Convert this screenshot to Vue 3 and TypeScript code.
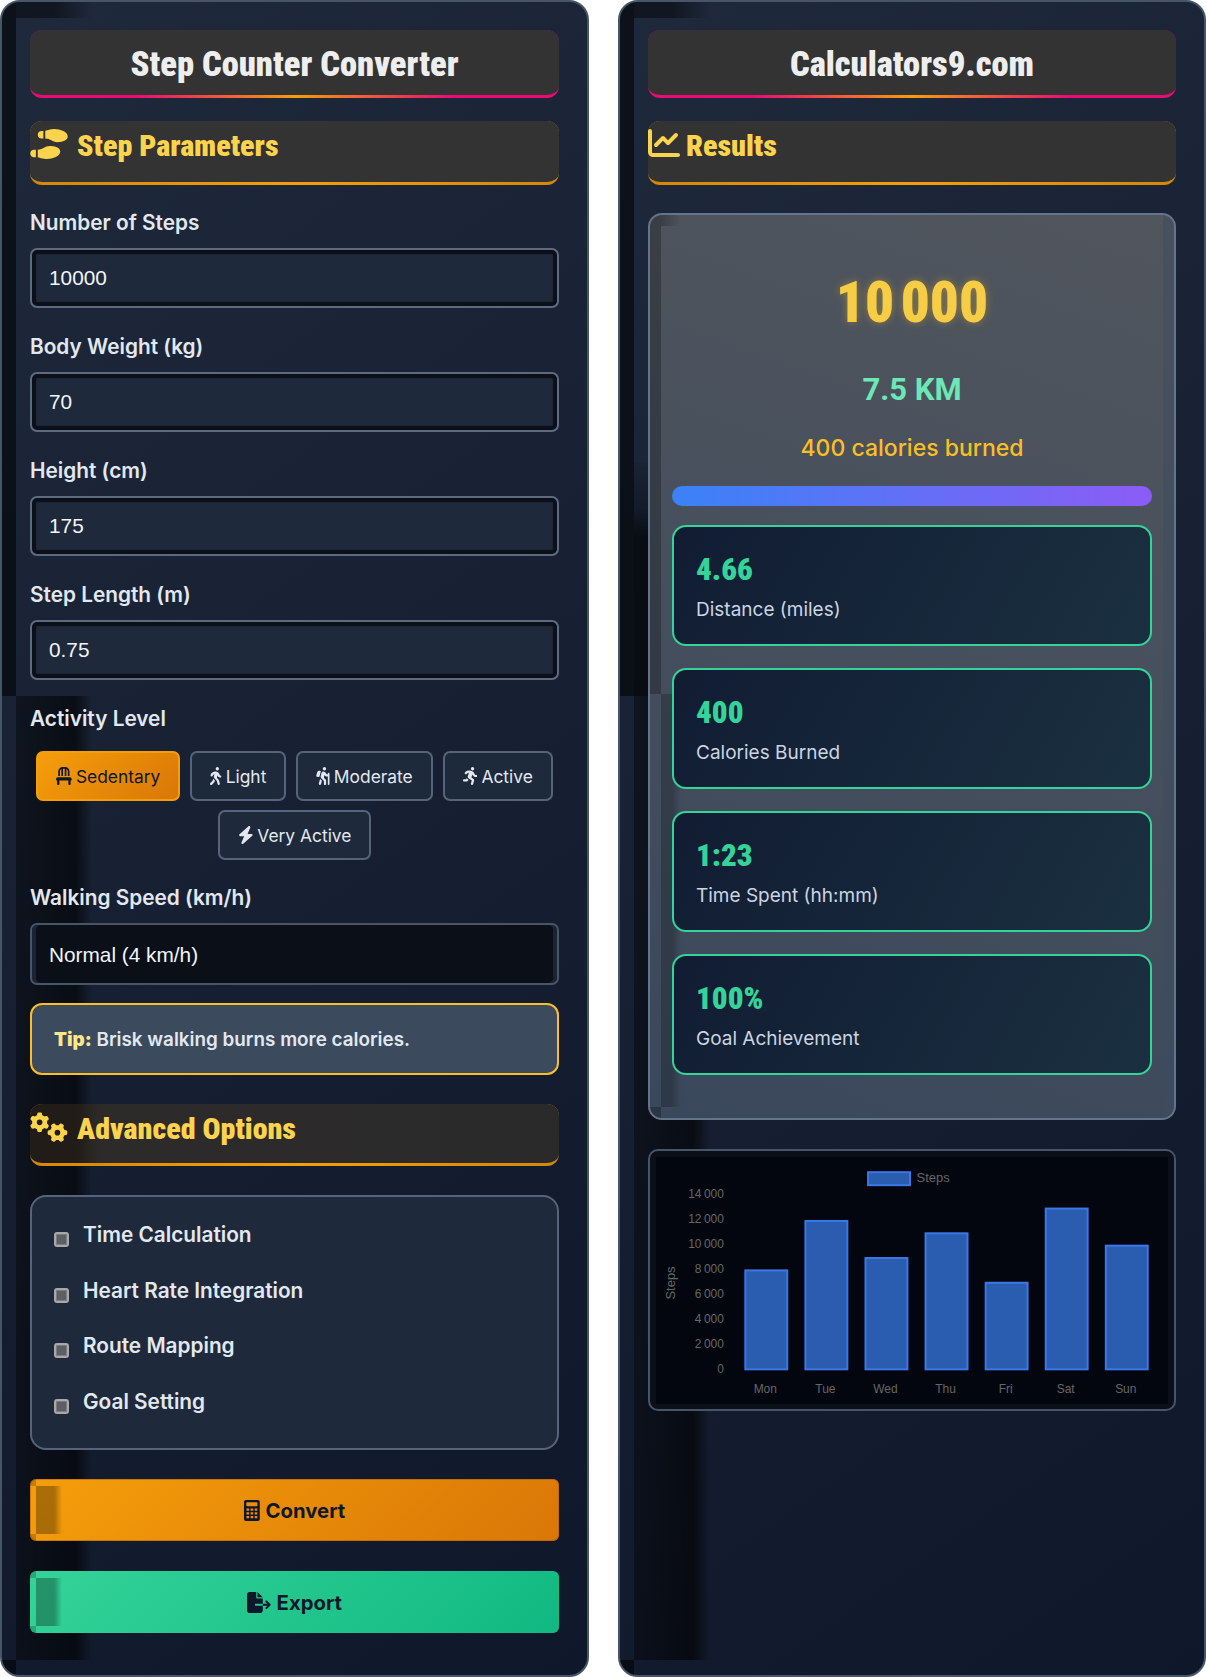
<script setup lang="ts">
import { ref } from 'vue'

interface Icon {
    box: string
    d: string
}

const icons: Record<string, Icon> = {
    shoes: { box: '0 0 640 512', d: 'M416 0C352.3 0 256 32 256 32V160c48 0 76 16 104 32s56 32 104 32c56.4 0 176-16 176-96S512 0 416 0zM128 96c0 35.3 28.7 64 64 64h32V32H192c-35.3 0-64 28.7-64 64zM288 512c96 0 224-48 224-128s-119.6-96-176-96c-48 0-76 16-104 32s-56 32-104 32V480s96.3 32 160 32zM0 416c0 35.3 28.7 64 64 64H96V352H64c-35.3 0-64 28.7-64 64z' },
    chart: { box: '0 0 512 512', d: 'M64 64c0-17.7-14.3-32-32-32S0 46.3 0 64V400c0 44.2 35.8 80 80 80H480c17.7 0 32-14.3 32-32s-14.3-32-32-32H80c-8.8 0-16-7.2-16-16V64zm406.6 86.6c12.5-12.5 12.5-32.8 0-45.3s-32.8-12.5-45.3 0L320 210.7l-57.4-57.4c-12.5-12.5-32.8-12.5-45.3 0l-112 112c-12.5 12.5-12.5 32.8 0 45.3s32.8 12.5 45.3 0L240 221.3l57.4 57.4c12.5 12.5 32.8 12.5 45.3 0l128-128z' },
    gears: { box: '0 0 640 512', d: 'M308.5 135.3c7.1-6.3 9.9-16.2 6.2-25c-2.3-5.3-4.8-10.5-7.6-15.5L304 89.4c-3-5-6.3-9.9-9.8-14.6c-5.7-7.6-15.7-10.1-24.7-7.1l-28.2 9.3c-10.7-8.8-23-16-36.2-20.9L199 27.1c-1.9-9.3-9.1-16.7-18.5-17.8C173.9 8.4 167.2 8 160.4 8h-.7c-6.8 0-13.5 .4-20.1 1.2c-9.4 1.1-16.6 8.6-18.5 17.8L115 56.1c-13.3 5-25.5 12.1-36.2 20.9L50.5 67.8c-9-3-19-.5-24.7 7.1c-3.5 4.7-6.8 9.6-9.9 14.6l-3 5.3c-2.8 5-5.3 10.2-7.6 15.6c-3.7 8.7-.9 18.6 6.2 25l22.2 19.8C32.6 161.9 32 168.9 32 176s.6 14.1 1.7 20.9L11.5 216.7c-7.1 6.3-9.9 16.2-6.2 25c2.3 5.3 4.8 10.5 7.6 15.6l3 5.2c3 5.1 6.3 9.9 9.9 14.6c5.7 7.6 15.7 10.1 24.7 7.1l28.2-9.3c10.7 8.8 23 16 36.2 20.9l6.1 29.1c1.9 9.3 9.1 16.7 18.5 17.8c6.7 .8 13.5 1.2 20.4 1.2s13.7-.4 20.4-1.2c9.4-1.1 16.6-8.6 18.5-17.8l6.1-29.1c13.3-5 25.5-12.1 36.2-20.9l28.2 9.3c9 3 19 .5 24.7-7.1c3.5-4.7 6.8-9.5 9.8-14.6l3.1-5.4c2.8-5 5.3-10.2 7.6-15.5c3.7-8.7 .9-18.6-6.2-25l-22.2-19.8c1.1-6.8 1.7-13.8 1.7-20.9s-.6-14.1-1.7-20.9l22.2-19.8zM112 176a48 48 0 1 1 96 0 48 48 0 1 1 -96 0zM504.7 500.5c6.3 7.1 16.2 9.9 25 6.2c5.3-2.3 10.5-4.8 15.5-7.6l5.4-3.1c5-3 9.9-6.3 14.6-9.8c7.6-5.7 10.1-15.7 7.1-24.7l-9.3-28.2c8.8-10.7 16-23 20.9-36.2l29.1-6.1c9.3-1.9 16.7-9.1 17.8-18.5c.8-6.7 1.2-13.5 1.2-20.4s-.4-13.7-1.2-20.4c-1.1-9.4-8.6-16.6-17.8-18.5L583.9 307c-5-13.3-12.1-25.5-20.9-36.2l9.3-28.2c3-9 .5-19-7.1-24.7c-4.7-3.5-9.6-6.8-14.6-9.9l-5.3-3c-5-2.8-10.2-5.3-15.6-7.6c-8.7-3.7-18.6-.9-25 6.2l-19.8 22.2c-6.8-1.1-13.8-1.7-20.9-1.7s-14.1 .6-20.9 1.7l-19.8-22.2c-6.3-7.1-16.2-9.9-25-6.2c-5.3 2.3-10.5 4.8-15.6 7.6l-5.2 3c-5.1 3-9.9 6.3-14.6 9.9c-7.6 5.7-10.1 15.7-7.1 24.7l9.3 28.2c-8.8 10.7-16 23-20.9 36.2L315.1 313c-9.3 1.9-16.7 9.1-17.8 18.5c-.8 6.7-1.2 13.5-1.2 20.4s.4 13.7 1.2 20.4c1.1 9.4 8.6 16.6 17.8 18.5l29.1 6.1c5 13.3 12.1 25.5 20.9 36.2l-9.3 28.2c-3 9-.5 19 7.1 24.7c4.7 3.5 9.5 6.8 14.6 9.8l5.4 3.1c5 2.8 10.2 5.3 15.5 7.6c8.7 3.7 18.6 .9 25-6.2l19.8-22.2c6.8 1.1 13.8 1.7 20.9 1.7s14.1-.6 20.9-1.7l19.8 22.2zM464 304a48 48 0 1 1 0 96 48 48 0 1 1 0-96z' },
    chair: { box: '0 0 448 512', d: 'M248 48V256h48V58.7c23.9 13.8 40 39.7 40 69.3V256h48V128C384 57.3 326.7 0 256 0H192C121.3 0 64 57.3 64 128V256h48V128c0-29.6 16.1-55.5 40-69.3V256h48V48h48zM48 288c-12.1 0-23.2 6.8-28.6 17.7l-16 32c-5 9.9-4.4 21.7 1.4 31.1S20.9 384 32 384l0 96c0 17.7 14.3 32 32 32s32-14.3 32-32V384H352v96c0 17.7 14.3 32 32 32s32-14.3 32-32V384c11.1 0 21.4-5.7 27.2-15.2s6.4-21.2 1.4-31.1l-16-32C423.2 294.8 412.1 288 400 288H48z' },
    walk: { box: '0 0 320 512', d: 'M160 48a48 48 0 1 1 96 0 48 48 0 1 1 -96 0zM126.5 199.3c-1 .4-1.9 .8-2.9 1.2l-8 3.5c-16.4 7.3-29 21.2-34.7 38.2l-2.6 7.8c-5.6 16.8-23.7 25.8-40.5 20.2s-25.8-23.7-20.2-40.5l2.6-7.8c11.4-34.1 36.6-61.9 69.4-76.5l8-3.5c20.8-9.2 43.3-14 66.1-14c44.6 0 84.8 26.8 101.9 67.9L281 232.7l21.4 10.7c15.8 7.9 22.2 27.1 14.3 42.9s-27.1 22.2-42.9 14.3L247 287.3c-10.3-5.2-18.4-13.8-22.8-24.5l-9.6-23-19.3 65.5 49.5 54c5.4 5.9 9.2 13 11.2 20.8l23 92.1c4.3 17.1-6.1 34.5-23.3 38.8s-34.5-6.1-38.8-23.3l-22-88.1-70.7-77.1c-14.8-16.1-20.3-38.6-14.7-59.7l16.9-63.5zM68.7 398l25-62.4c2.1 3 4.5 5.8 7 8.6l40.7 44.4-14.5 36.2c-2.4 6-6 11.5-10.6 16.1L54.6 502.6c-12.5 12.5-32.8 12.5-45.3 0s-12.5-32.8 0-45.3L68.7 398z' },
    hike: { box: '0 0 384 512', d: 'M192 48a48 48 0 1 1 96 0 48 48 0 1 1 -96 0zm51.3 182.7L224.2 307l49.7 49.7c9 9 14.1 21.2 14.1 33.9V480c0 17.7-14.3 32-32 32s-32-14.3-32-32V397.3l-73.9-73.9c-15.8-15.8-22.2-38.6-16.9-60.3l20.4-84c8.3-34.1 42.7-54.9 76.7-46.4c19 4.8 35.6 16.4 46.4 32.7L305.1 208H336V184c0-13.3 10.7-24 24-24s24 10.7 24 24v55.8c0 .1 0 .2 0 .2s0 .2 0 .2V488c0 13.3-10.7 24-24 24s-24-10.7-24-24V272H296.6c-16 0-31-8-39.9-21.4l-13.3-20zM81.1 471.9L117.3 334c3 4.2 6.4 8.2 10.1 11.9l41.9 41.9L142.9 488.1c-4.5 17.1-22 27.3-39.1 22.8s-27.3-22-22.8-39.1zM136.6 125.9L101.4 266.5c-3 12.1-14.9 19.9-27.2 17.9l-47.9-8c-14-2.3-22.9-16.3-19.2-30L31.9 155c9.5-35.4 46.2-56 81.3-45.9c13.5 3.9 26.9 8.7 23.4 16.8z' },
    run: { box: '0 0 417 512', d: 'M320 48a48 48 0 1 0 -96 0 48 48 0 1 0 96 0zM125.7 175.5c9.9-9.9 23.4-15.5 37.5-15.5c1.9 0 3.8 .1 5.6 .3L137.6 254c-9.3 28 1.7 58.8 26.8 74.5l86.2 53.9-25.4 88.8c-4.9 17 5 34.7 22 39.6s34.7-5 39.6-22l28.7-100.4c5.9-20.6-2.6-42.6-20.7-53.9L238 299l30.9-82.4 5.1 12.3C289 264.7 323.9 288 362.7 288H384c17.7 0 32-14.3 32-32s-14.3-32-32-32H362.7c-12.9 0-24.6-7.8-29.5-19.7l-6.3-15c-14.6-35.1-44.1-61.9-80.5-73.1l-48.7-15c-11.1-3.4-22.7-5.2-34.4-5.2c-31 0-60.8 12.3-82.7 34.3L57.4 153.4c-12.5 12.5-12.5 32.8 0 45.3s32.8 12.5 45.3 0l23.1-23.1zM91.2 352H32c-17.7 0-32 14.3-32 32s14.3 32 32 32h69.6c19 0 36.2-11.2 43.9-28.5L157 361.6l-9.5-6c-17.5-10.9-30.5-26.8-37.9-44.9L91.2 352z' },
    bolt: { box: '0 0 448 512', d: 'M349.4 44.6c5.9-13.7 1.5-29.7-10.6-38.5s-28.6-8-39.9 1.8l-256 224c-10 8.8-13.6 22.9-8.9 35.3S50.7 288 64 288H175.5L98.6 467.4c-5.9 13.7-1.5 29.7 10.6 38.5s28.6 8 39.9-1.8l256-224c10-8.8 13.6-22.9 8.9-35.3s-16.6-20.7-30-20.7H272.5L349.4 44.6z' },
    calc: { box: '0 0 384 512', d: 'M48 0C21 0 0 21 0 48v416c0 27 21 48 48 48h288c27 0 48-21 48-48V48c0-27-21-48-48-48H48zM72 56h240c9 0 16 7 16 16v64c0 9-7 16-16 16H72c-9 0-16-7-16-16V72c0-9 7-16 16-16zM60 208h64v52H60zM160 208h64v52h-64zM260 208h64v52h-64zM60 300h64v52H60zM160 300h64v52h-64zM260 300h64v52h-64zM60 392h64v52H60zM160 392h64v52h-64zM260 392h64v52h-64z' },
    exportFile: { box: '0 0 576 512', d: 'M0 64C0 28.7 28.7 0 64 0H224V128c0 17.7 14.3 32 32 32H384V288H216c-13.3 0-24 10.7-24 24s10.7 24 24 24H384V448c0 35.3-28.7 64-64 64H64c-35.3 0-64-28.7-64-64V64zM384 336V288H494.1l-39-39c-9.4-9.4-9.4-24.6 0-33.9s24.6-9.4 33.9 0l80 80c9.4 9.4 9.4 24.6 0 33.9l-80 80c-9.4 9.4-24.6 9.4-33.9 0s-9.4-24.6 0-33.9l39-39H384zm0-208H256V0L384 128z' }
}

const fields = [
    { label: 'Number of Steps', value: '10000' },
    { label: 'Body Weight (kg)', value: '70' },
    { label: 'Height (cm)', value: '175' },
    { label: 'Step Length (m)', value: '0.75' }
]

const levels = [
    { name: 'Sedentary', icon: 'chair' },
    { name: 'Light', icon: 'walk' },
    { name: 'Moderate', icon: 'hike' },
    { name: 'Active', icon: 'run' },
    { name: 'Very Active', icon: 'bolt' }
]
const activeLevel = ref('Sedentary')

const options = ['Time Calculation', 'Heart Rate Integration', 'Route Mapping', 'Goal Setting']

const stats = [
    { value: '4.66', label: 'Distance (miles)' },
    { value: '400', label: 'Calories Burned' },
    { value: '1:23', label: 'Time Spent (hh:mm)' },
    { value: '100%', label: 'Goal Achievement' }
]

// chart geometry, same scale as the bars in the picture
const baseY = 212.5
const week = [
    { day: 'Mon', steps: 8000 },
    { day: 'Tue', steps: 12000 },
    { day: 'Wed', steps: 9000 },
    { day: 'Thu', steps: 11000 },
    { day: 'Fri', steps: 7000 },
    { day: 'Sat', steps: 13000 },
    { day: 'Sun', steps: 10000 }
]
const bars = week.map((d, i) => ({
    ...d,
    x: 89.5 + i * 60.2,
    h: d.steps * 0.01239
}))
const ticks = [0, 2000, 4000, 6000, 8000, 10000, 12000, 14000].map((t) => ({
    y: baseY - t * 0.01252,
    text: t === 0 ? '0' : `${t / 1000}\u202f000`
}))
</script>

<template>
    <div class="page">
        <section class="panel">
            <i class="shade shade-side"></i>
            <i class="shade shade-top"></i>
            <i class="shade shade-low"></i>
            <i class="shade shade-corner"></i>

            <div class="panel-body">
                <h1 class="main-title">Step Counter Converter</h1>

                <h2 class="section-title">
                    <svg class="title-icon" :viewBox="icons.shoes.box"><path :d="icons.shoes.d" /></svg>
                    Step Parameters
                </h2>

                <div v-for="f in fields" :key="f.label" class="field">
                    <label>{{ f.label }}</label>
                    <input class="text-input" type="text" :value="f.value" />
                </div>

                <div class="field activity">
                    <label>Activity Level</label>
                    <div class="levels">
                        <button
                            v-for="l in levels"
                            :key="l.name"
                            class="level"
                            :class="{ on: l.name === activeLevel }"
                            @click="activeLevel = l.name"
                        >
                            <svg class="level-icon" :viewBox="icons[l.icon].box"><path :d="icons[l.icon].d" /></svg>
                            {{ l.name }}
                        </button>
                    </div>
                </div>

                <div class="field speed">
                    <label>Walking Speed (km/h)</label>
                    <select class="speed-select">
                        <option>Normal (4 km/h)</option>
                    </select>
                </div>

                <div class="tip"><strong>Tip:</strong> Brisk walking burns more calories.</div>

                <h2 class="section-title advanced">
                    <svg class="title-icon" :viewBox="icons.gears.box"><path :d="icons.gears.d" /></svg>
                    Advanced Options
                </h2>

                <div class="options">
                    <div v-for="o in options" :key="o" class="option">
                        <span class="check"></span>
                        <span>{{ o }}</span>
                    </div>
                </div>

                <button class="action convert">
                    <i class="action-shade"></i>
                    <svg class="action-icon" :viewBox="icons.calc.box"><path fill-rule="evenodd" :d="icons.calc.d" /></svg>
                    Convert
                </button>
                <button class="action export">
                    <i class="action-shade"></i>
                    <svg class="action-icon wide" :viewBox="icons.exportFile.box"><path :d="icons.exportFile.d" /></svg>
                    Export
                </button>
            </div>
        </section>

        <section class="panel">
            <i class="shade shade-side"></i>
            <i class="shade shade-top"></i>
            <i class="shade shade-low"></i>
            <i class="shade shade-corner"></i>
            <i class="shade shade-blob"></i>

            <div class="panel-body">
                <h1 class="main-title">Calculators9.com</h1>

                <h2 class="section-title">
                    <svg class="title-icon chart" :viewBox="icons.chart.box"><path :d="icons.chart.d" /></svg>
                    Results
                </h2>

                <div class="results">
                    <i class="card-shade side"></i>
                    <i class="card-shade top"></i>
                    <i class="card-shade low"></i>
                    <i class="card-shade corner"></i>
                    <i class="card-shade right"></i>
                    <div class="results-body">
                        <div class="count">10&#8239;000</div>
                        <div class="distance">7.5 KM</div>
                        <div class="calories">400 calories burned</div>
                        <div class="progress"></div>
                        <div v-for="s in stats" :key="s.label" class="stat">
                            <div class="stat-value">{{ s.value }}</div>
                            <div class="stat-label">{{ s.label }}</div>
                        </div>
                    </div>
                </div>

                <div class="chart-box">
                    <svg class="chart-svg" width="513" height="247" viewBox="0 0 513 247">
                        <rect x="212.5" y="15" width="42" height="13" class="bar" />
                        <text x="261" y="25" class="tick big">Steps</text>
                        <text class="tick big" text-anchor="middle" transform="translate(19 126) rotate(-90)">Steps</text>
                        <text v-for="t in ticks" :key="t.text" x="68" :y="t.y + 4" text-anchor="end" class="tick">{{ t.text }}</text>
                        <template v-for="b in bars" :key="b.day">
                            <rect class="bar" :x="b.x" :y="baseY - b.h" width="42" :height="b.h" />
                            <text :x="b.x + 20" y="236" text-anchor="middle" class="tick">{{ b.day }}</text>
                        </template>
                    </svg>
                </div>
            </div>
        </section>
    </div>
</template>

<style scoped>
.page {
    display: grid;
    grid-template-columns: 589px 588px;
    gap: 29px;
    width: 1206px;
    min-height: 1677px;
    font-family: Inter, "Liberation Sans", sans-serif;
    color: #e2e8f0;
}

.panel {
    position: relative;
    overflow: hidden;
    height: 1677px;
    box-sizing: border-box;
    border: 2px solid #475569;
    border-radius: 20px;
    background: linear-gradient(145deg, #1e293b, #0f172a);
}

.panel-body {
    position: relative;
    z-index: 1;
    padding: 28px;
}

/* the broken inset shadow of the original, left edge */
.shade {
    position: absolute;
    display: block;
}

.shade-side {
    left: 0;
    top: 0;
    width: 14px;
    height: 694px;
    background: rgba(0, 0, 0, 0.55);
}

.shade-top {
    left: 14px;
    top: 0;
    width: 76px;
    height: 16px;
    background: linear-gradient(90deg, rgba(0, 0, 0, 0.45) 50%, transparent);
}

.shade-low {
    left: 14px;
    top: 694px;
    bottom: 15px;
    width: 76px;
    background: linear-gradient(90deg, rgba(0, 0, 0, 0.4), rgba(0, 0, 0, 0.62) 78%, transparent);
}

.shade-corner {
    left: 0;
    bottom: 0;
    width: 14px;
    height: 15px;
    background: rgba(0, 0, 0, 0.55);
}

.shade-blob {
    left: 14px;
    top: 460px;
    width: 34px;
    height: 234px;
    background: linear-gradient(180deg, rgba(0, 0, 0, 0.05), rgba(0, 0, 0, 0.25) 20%, rgba(0, 0, 0, 0.65) 32%);
}

.main-title,
.section-title,
.count,
.stat-value {
    font-family: "Roboto Condensed", Roboto, sans-serif;
    font-stretch: condensed;
    font-weight: 900;
}

.main-title {
    box-sizing: border-box;
    height: 68px;
    margin: 0 0 23px;
    padding-top: 13px;
    border-radius: 12px;
    border-bottom: 3px solid transparent;
    background:
        linear-gradient(#333, #333) padding-box,
        linear-gradient(90deg, #ec0a74 20%, #f59e0b 50%, #ec0a74 80%) border-box;
    color: #eee;
    font-size: 34.5px;
    line-height: 42px;
    text-align: center;
}

.section-title {
    display: flex;
    gap: 9px;
    box-sizing: border-box;
    height: 64px;
    margin: 0 0 25px;
    padding-top: 6px;
    border-radius: 12px;
    border-bottom: 3px solid transparent;
    background:
        linear-gradient(#333, #333) padding-box,
        linear-gradient(90deg, #d48806, #f59e0b, #d48806) border-box;
    color: #fcd34d;
    font-size: 30px;
    line-height: 38px;
}

.section-title.advanced {
    height: 62px;
    margin-bottom: 29px;
    background:
        linear-gradient(90deg, #211c17 9%, #2d2b2a 13%, #2a2a2a) padding-box,
        linear-gradient(90deg, #d48806, #f59e0b, #d48806) border-box;
}

.title-icon {
    flex: none;
    width: 38px;
    height: 30px;
    margin-top: 2px;
    fill: #fcd34d;
}

.title-icon.chart {
    width: 32px;
    height: 32px;
    margin: 0 -3px 0 0;
}

.field {
    margin-bottom: 26px;
}

.field label {
    display: block;
    height: 38px;
    color: #e2e8f0;
    font-size: 20.8px;
    font-weight: 600;
    line-height: 26px;
}

.text-input,
.speed-select {
    display: block;
    box-sizing: border-box;
    width: 100%;
    height: 60px;
    padding: 0 17px;
    border: 2px solid #5d6b82;
    border-radius: 7px;
    outline: none;
    font-family: "Liberation Sans", Arial, sans-serif;
    font-size: 20.8px;
}

.text-input {
    background: #1e293b;
    box-shadow: inset 0 0 1px 4px #0a0f18;
    color: #f1f5f9;
}

.speed-select {
    height: 62px;
    border-color: #475569;
    appearance: none;
    background: #0a0f18;
    box-shadow: inset 4px 0 0 #1a2434, inset -4px 0 0 #1a2434;
    color: #f1f5f9;
}

.activity {
    margin-bottom: 25px;
}

.activity label {
    height: 45px;
}

.levels {
    display: flex;
    flex-wrap: wrap;
    justify-content: center;
    gap: 9px 10px;
}

.level {
    display: inline-flex;
    align-items: center;
    gap: 4px;
    box-sizing: border-box;
    height: 50px;
    padding: 0 18px;
    border: 2px solid #56647b;
    border-radius: 7px;
    background: #1e293b;
    color: #e2e8f0;
    font-family: Inter, sans-serif;
    font-size: 17.4px;
}

.level.on {
    border-color: #f59e0b;
    background: linear-gradient(135deg, #f59e0b, #d97706);
    color: #0f172a;
}

.level-icon {
    height: 18px;
    fill: currentColor;
}

.speed {
    margin-bottom: 18px;
}

.tip {
    box-sizing: border-box;
    height: 72px;
    padding: 0 22px;
    border: 2px solid #fbbf24;
    border-radius: 12px;
    background: #3c4a5e;
    color: #e2e8f0;
    font-size: 18.85px;
    font-weight: 600;
    line-height: 69px;
}

.tip strong {
    color: #fde68a;
}

.tip + .section-title {
    margin-top: 29px;
}

.options {
    box-sizing: border-box;
    height: 255px;
    margin-bottom: 29px;
    padding: 20px 22px;
    border: 2px solid #56647b;
    border-radius: 16px;
    background: #1e293b;
}

.option {
    display: flex;
    gap: 14px;
    height: 55.6px;
    font-size: 20.8px;
    font-weight: 600;
    line-height: 36px;
}

.check {
    flex: none;
    width: 15px;
    height: 15px;
    margin-top: 15px;
    box-sizing: border-box;
    border: 2px solid #a8a8a8;
    border-radius: 3px;
    background: #5c5f66;
    box-shadow: inset 0 0 0 1px #7d7d7d;
}

.action {
    position: relative;
    display: flex;
    align-items: center;
    justify-content: center;
    gap: 6px;
    width: 100%;
    height: 62px;
    margin-bottom: 30px;
    border: 0;
    border-radius: 6px;
    color: #0f172a;
    font-family: Inter, sans-serif;
    font-size: 20.3px;
    font-weight: 700;
}

.action::before,
.action::after {
    content: "";
    position: absolute;
    left: 0;
    width: 6px;
    height: 7px;
    background: rgba(0, 0, 0, 0.2);
}

.action::before {
    top: 0;
}

.action::after {
    bottom: 0;
}

.convert {
    background: linear-gradient(135deg, #f59e0b, #d97706);
    box-shadow: inset 0 0 0 1px rgba(170, 90, 0, 0.5);
}

.export {
    background: linear-gradient(135deg, #34d399, #10b981);
}

.action-shade {
    position: absolute;
    left: 6px;
    top: 7px;
    bottom: 7px;
    width: 26px;
    background: linear-gradient(90deg, rgba(0, 0, 0, 0.3) 70%, transparent);
}

.action-icon {
    height: 21px;
    fill: #0f172a;
}

.results {
    position: relative;
    overflow: hidden;
    box-sizing: border-box;
    height: 907px;
    margin-top: 28px;
    border: 2px solid #64748b;
    border-radius: 14px;
    background: linear-gradient(20deg, #3a485c, #51565d);
}

.results-body {
    position: relative;
    z-index: 1;
    padding: 0 22px;
    text-align: center;
}

.card-shade {
    position: absolute;
    display: block;
}

.card-shade.side {
    left: 0;
    top: 0;
    width: 11px;
    height: 479px;
    background: rgba(0, 0, 0, 0.25);
}

.card-shade.top {
    left: 11px;
    top: 0;
    width: 20px;
    height: 11px;
    background: linear-gradient(90deg, rgba(0, 0, 0, 0.25), transparent);
}

.card-shade.low {
    left: 11px;
    top: 479px;
    bottom: 11px;
    width: 20px;
    background: linear-gradient(90deg, rgba(0, 0, 0, 0.22) 55%, transparent);
}

.card-shade.corner {
    left: 0;
    bottom: 0;
    width: 11px;
    height: 11px;
    background: rgba(0, 0, 0, 0.25);
}

.card-shade.right {
    right: 0;
    top: 0;
    bottom: 0;
    width: 11px;
    background: rgba(62, 76, 96, 0.5);
}

.count {
    padding-top: 51px;
    height: 123px;
    box-sizing: border-box;
    color: #f8cd46;
    font-size: 57px;
    line-height: 74px;
    text-shadow: 0 0 8px rgba(251, 191, 36, 0.4);
}

.distance {
    height: 54px;
    padding-top: 33.5px;
    color: #6ee7b7;
    font-family: Roboto, sans-serif;
    font-size: 31px;
    font-weight: 700;
    line-height: 36px;
}

.calories {
    height: 32px;
    margin-top: 6px;
    color: #fbbf24;
    font-size: 23px;
    font-weight: 500;
    line-height: 32px;
}

.progress {
    height: 20px;
    margin: 22px 0 19px;
    border-radius: 10px;
    background: linear-gradient(90deg, #3b82f6, #8b5cf6);
}

.stat {
    box-sizing: border-box;
    height: 121px;
    margin-bottom: 22px;
    padding: 24px 22px 0;
    border: 2px solid #34d399;
    border-radius: 14px;
    background: linear-gradient(120deg, #111c33, #1a3040);
    text-align: left;
}

.stat-value {
    color: #34d399;
    font-size: 31px;
    line-height: 38px;
}

.stat-label {
    margin-top: 8px;
    color: #cbd5e1;
    font-size: 19px;
    line-height: 26px;
}

.chart-box {
    box-sizing: border-box;
    height: 262px;
    margin-top: 29px;
    padding: 6px;
    border: 2px solid #475569;
    border-radius: 10px;
    background: #0a0f1a;
}

.chart-svg {
    display: block;
    width: 100%;
    background: #03060f;
}

.tick {
    fill: #666;
    font-family: "Liberation Sans", Arial, sans-serif;
    font-size: 12px;
}

.tick.big {
    font-size: 13px;
}

.bar {
    fill: #2a5db0;
    stroke: #3b78e7;
    stroke-width: 2;
}
</style>

<style>
html,
body {
    background: #fff;
}
</style>
